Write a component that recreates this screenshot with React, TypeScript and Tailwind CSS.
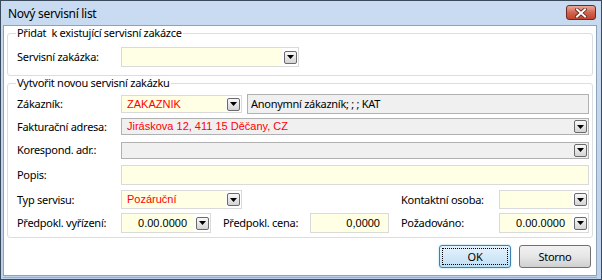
import React from "react";

const lbl =
  "font-['Noto_Sans',sans-serif] text-[11px] leading-[14px] tracking-[-0.28px] text-black whitespace-nowrap";
const val = "font-['Liberation_Sans',Arial,sans-serif] text-[11px] leading-[13px] whitespace-nowrap";

function Arrow() {
  return (
    <div className="w-[13px] h-[13px] shrink-0 rounded-[2px] border border-[#6a6a6a] bg-linear-to-b from-[#f8f8f8] to-[#d4d4d4] flex items-center justify-center">
      <svg width="7" height="4" viewBox="0 0 7 4">
        <path d="M0 0H7L3.5 4Z" fill="#000" />
      </svg>
    </div>
  );
}

function Combo({
  className,
  value,
  right,
  red,
}: {
  className: string;
  value?: string;
  right?: boolean;
  red?: boolean;
}) {
  return (
    <div className={`flex shrink-0 border border-[#dadada] bg-white ${className}`}>
      <div
        className={`flex-1 bg-[#ffffe6] flex items-center ${
          right ? "justify-end pr-[7px]" : "pl-[5px]"
        } ${val} ${red ? "text-[#ff0000]" : "text-black"}`}
      >
        {value}
      </div>
      <div className="w-[16px] flex items-center pl-[2px]">
        <Arrow />
      </div>
    </div>
  );
}

function GrayBox({
  className,
  value,
  arrow,
  red,
  textClass,
}: {
  className: string;
  value?: string;
  arrow?: boolean;
  red?: boolean;
  textClass?: string;
}) {
  return (
    <div className={`flex items-center border border-[#b1b1b1] bg-[#f0f0f0] ${className}`}>
      <div
        className={`flex-1 ${textClass ?? `pl-[5px] ${val}`} ${
          red ? "text-[#ff0000]" : "text-black"
        }`}
      >
        {value}
      </div>
      {arrow && (
        <div className="pr-[1px]">
          <Arrow />
        </div>
      )}
    </div>
  );
}

function Label({ className, children }: { className: string; children: React.ReactNode }) {
  return <div className={`${lbl} shrink-0 ${className}`}>{children}</div>;
}

function Button({ children, focused }: { children: React.ReactNode; focused?: boolean }) {
  if (focused) {
    return (
      <div className="w-[72px] h-[23px] rounded-[3px] border border-[#3c7fb1] bg-linear-to-b from-[#e6f3fc] to-[#bfdff5] p-[2px] shadow-[0_0_2px_#7fd3f7]">
        <div className={`h-full border border-dotted border-black flex items-center justify-center ${lbl}`}>
          {children}
        </div>
      </div>
    );
  }
  return (
    <div
      className={`w-[72px] h-[23px] rounded-[3px] border border-[#707070] bg-linear-to-b from-[#f2f2f2] via-[#e6e6e6] to-[#d0d0d0] flex items-center justify-center ${lbl}`}
    >
      {children}
    </div>
  );
}

function CloseButton() {
  return (
    <div className="w-[30px] h-[15px] rounded-[3px] border border-[#6b2a22] bg-linear-to-b from-[#e9a99b] via-[#d26550] to-[#c0442c] flex items-center justify-center">
      <svg width="12" height="10" viewBox="0 0 12 10">
        <path
          d="M2 1.5L10 8.5M10 1.5L2 8.5"
          stroke="#5a2018"
          strokeWidth="3.6"
          strokeLinecap="square"
        />
        <path
          d="M2 1.5L10 8.5M10 1.5L2 8.5"
          stroke="#ffffff"
          strokeWidth="2"
          strokeLinecap="square"
        />
      </svg>
    </div>
  );
}

export default function App() {
  return (
    <div className="w-[602px] h-[280px] border border-[#3a4a5c] bg-linear-to-b from-[#c9dbf0] to-[#bcd1ea] flex flex-col overflow-hidden">
      {/* title bar */}
      <div className="h-[24px] shrink-0 flex items-start justify-between">
        <div className="pl-[7px] pt-[6px] font-['Noto_Sans',sans-serif] text-[12px] leading-[14px] tracking-[-0.3px] text-black">
          Nový servisní list
        </div>
        <div className="pt-[4px] pr-[5px]">
          <CloseButton />
        </div>
      </div>

      {/* client */}
      <div className="ml-[2px] mr-[4px] h-[251px] shrink-0 border border-[#8ea2b9] bg-white flex flex-col">
        {/* group 1 */}
        <fieldset className="mx-[3px] rounded-[3px] border border-[#d5dfe5] px-0 pb-[7px]">
          <legend className={`${lbl} ml-[8px] px-[1px]`}>Přidat&nbsp; k existující servisní zakázce</legend>
          <div className="mt-[6px] h-[22px] flex items-center pl-[9px] pr-[3px]">
            <Label className="w-[104px]">Servisní zakázka:</Label>
            <Combo className="w-[178px] h-[20px]" />
          </div>
        </fieldset>

        {/* group 2 */}
        <fieldset className="mx-[3px] rounded-[3px] border border-[#d5dfe5] px-0 pb-[2px]">
          <legend className={`${lbl} ml-[8px] px-[1px]`}>Vytvořit novou servisní zakázku</legend>
          <div className="mt-[3px] pl-[9px] pr-[3px] flex flex-col">
            <div className="h-[22px] flex items-center">
              <Label className="w-[104px]">Zákazník:</Label>
              <Combo className="w-[121px] h-[18px]" value="ZAKAZNIK" red />
              <GrayBox
                className="ml-[5px] flex-1 h-[20px]"
                textClass={`pl-[3px] ${lbl}`}
                value="Anonymní zákazník; ; ; KAT"
              />
            </div>
            <div className="h-[23px] flex items-center">
              <Label className="w-[104px]">Fakturační adresa:</Label>
              <GrayBox className="flex-1 h-[17px]" value="Jiráskova 12, 411 15  Děčany, CZ" red arrow />
            </div>
            <div className="h-[24px] flex items-center">
              <Label className="w-[104px]">Korespond. adr.:</Label>
              <GrayBox className="flex-1 h-[17px]" arrow />
            </div>
            <div className="h-[26px] flex items-center">
              <Label className="w-[104px]">Popis:</Label>
              <div className="flex-1 h-[20px] border border-[#dadada] bg-[#ffffe6]" />
            </div>
            <div className="h-[23px] flex items-center">
              <Label className="w-[104px]">Typ servisu:</Label>
              <Combo className="w-[121px] h-[19px]" value="Pozáruční" red />
              <div className="flex-1" />
              <Label className="w-[98px]">Kontaktní osoba:</Label>
              <Combo className="w-[90px] h-[19px]" />
            </div>
            <div className="h-[24px] flex items-center">
              <Label className="w-[104px]">Předpokl. vyřízení:</Label>
              <Combo className="w-[90px] h-[20px]" value="0.00.0000" right />
              <Label className="ml-[12px] w-[87px]">Předpokl. cena:</Label>
              <div
                className={`w-[79px] h-[20px] border border-[#dadada] bg-[#ffffe6] flex items-center justify-end pr-[8px] ${val} text-black`}
              >
                0,0000
              </div>
              <div className="flex-1" />
              <Label className="w-[98px]">Požadováno:</Label>
              <Combo className="w-[90px] h-[20px]" value="0.00.0000" right />
            </div>
          </div>
        </fieldset>

        {/* buttons */}
        <div className="mt-[7px] flex justify-end gap-[8px] pr-[5px]">
          <Button focused>OK</Button>
          <Button>Storno</Button>
        </div>
      </div>
      <div className="mt-[1px] ml-[2px] mr-[4px] h-[1px] bg-[#5ec6ea]" />
    </div>
  );
}
